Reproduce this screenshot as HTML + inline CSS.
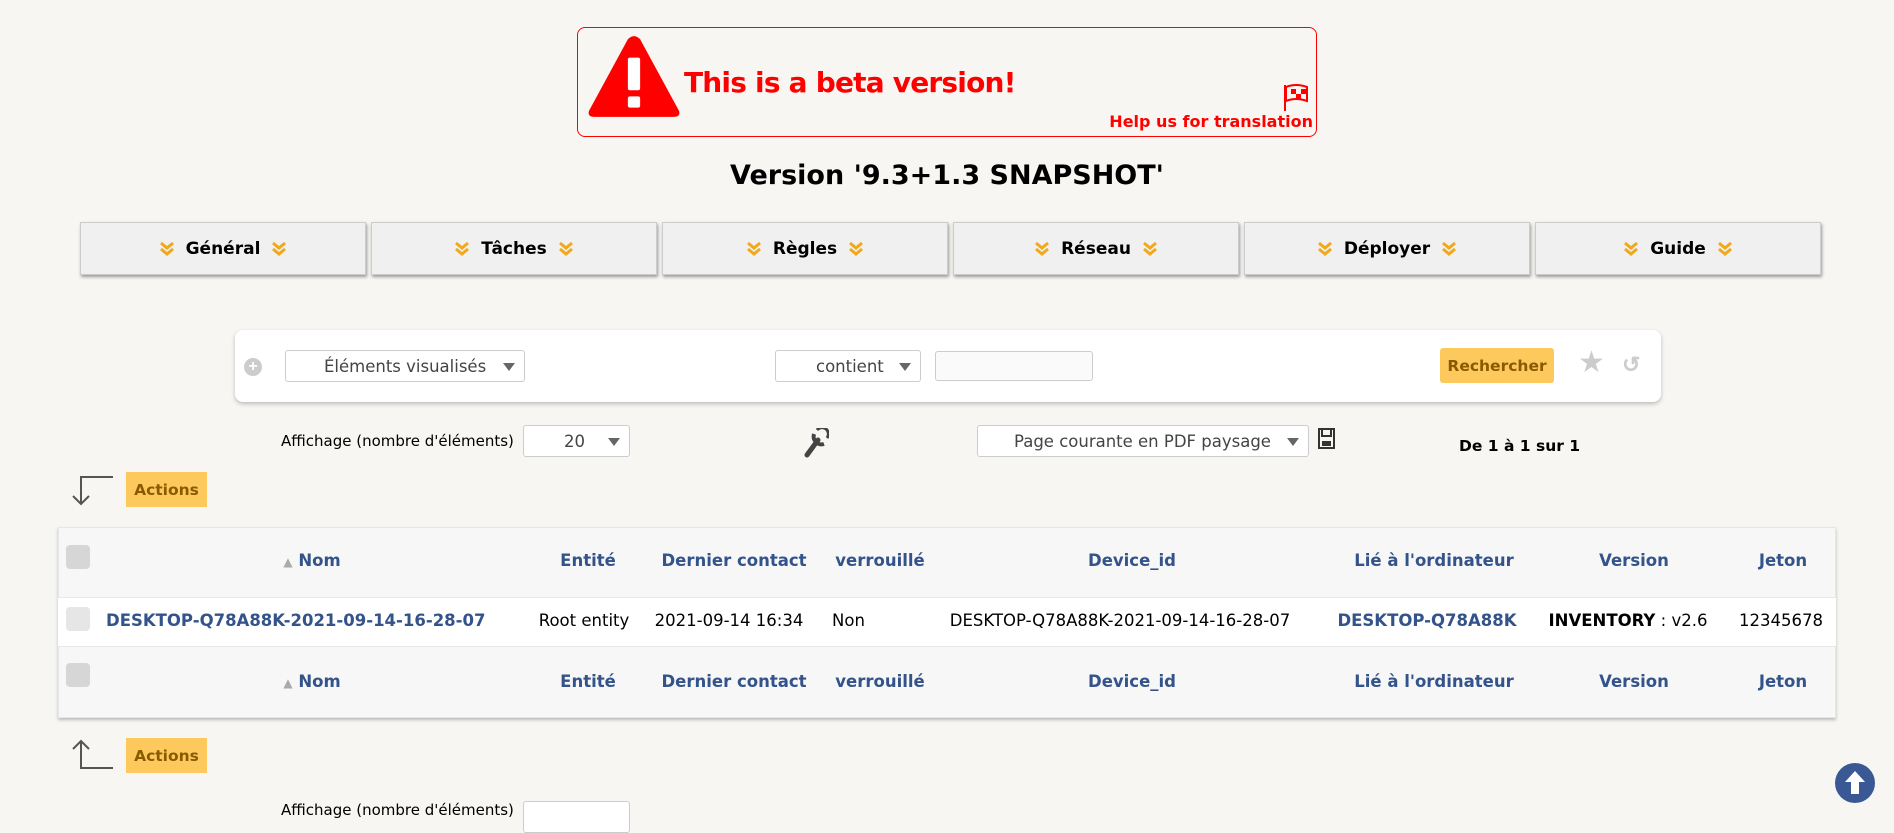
<!DOCTYPE html>
<html><head><meta charset="utf-8"><style>
*{box-sizing:border-box;margin:0;padding:0}
body{width:1894px;height:811px;background:#f7f6f2;font-family:"DejaVu Sans","Liberation Sans",sans-serif;position:relative;overflow:hidden;color:#000}
.a{position:absolute}
.beta{left:577px;top:27px;width:740px;height:110px;border:1px solid #f00;border-radius:8px}
.menu{top:222px;width:286px;height:53px;background:#f0f0f0;border:1px solid #ccc;box-shadow:1px 2px 3px #999;display:flex;align-items:center;justify-content:center;font:bold 17px "DejaVu Sans",sans-serif;gap:12px}
.sel{background:#fff;border:1px solid #ccc;border-radius:3px;height:32px;font-size:16.5px;color:#444;display:flex;align-items:center}
.tri{position:absolute;right:9px;top:12px;width:0;height:0;border-left:6px solid transparent;border-right:6px solid transparent;border-top:8px solid #666}
.btn{background:#fec95c;color:#8a5a00;font-weight:bold;font-size:15.5px;display:flex;align-items:center;justify-content:center}
.th{color:#33538a;font-weight:bold;font-size:16.5px;transform:translateX(-50%);white-space:nowrap}
.td{font-size:16.5px;transform:translateX(-50%);white-space:nowrap}
.cb{width:24px;height:24px;background:#d6d6d6;border-radius:4px}
.lab{font-size:15px;white-space:nowrap}
</style></head><body>
<svg width="0" height="0" style="position:absolute"><defs><symbol id="ch" viewBox="0 0 14 16"><path d="M1 2 L7 7 L13 2 M1 8 L7 13 L13 8" fill="none" stroke="#f0a81c" stroke-width="3"/></symbol></defs></svg>
<div class="a beta">
 <svg class="a" style="left:9px;top:5px" width="94" height="88" viewBox="0 0 92 82"><path d="M40 4 Q46 -2 52 4 L90 74 Q92 80 85 80 L7 80 Q0 80 2 74 Z" fill="#f00"/><rect x="40" y="22" width="12" height="32" rx="2" fill="#fff"/><rect x="40" y="60" width="12" height="11" rx="2" fill="#fff"/></svg>
 <div class="a" style="left:106px;top:38px;color:#f00;font:bold 28px 'DejaVu Sans',sans-serif;letter-spacing:-0.8px">This is a beta version!</div>
 <svg class="a" style="left:705px;top:55px" width="26" height="28" viewBox="0 0 26 28"><line x1="2" y1="2" x2="2" y2="28" stroke="#f00" stroke-width="2"/><path d="M3 4 Q13 0 24 4 L24 18 Q13 14 3 18Z" fill="none" stroke="#f00" stroke-width="2"/><rect x="8" y="6" width="5" height="5" fill="#f00"/><rect x="13" y="11" width="5" height="5" fill="#f00"/><rect x="18" y="6" width="5" height="5" fill="#f00"/></svg>
 <div class="a" style="right:3px;top:84px;color:#f00;font:bold 16px 'DejaVu Sans',sans-serif">Help us for translation</div>
</div>
<div class="a" style="left:0;width:1894px;top:160px;text-align:center;font:bold 27px 'DejaVu Sans',sans-serif">Version '9.3+1.3 SNAPSHOT'</div>
<div class="a menu" style="left:80px"><svg width="14" height="16"><use href="#ch"/></svg>Général<svg width="14" height="16"><use href="#ch"/></svg></div>
<div class="a menu" style="left:371px"><svg width="14" height="16"><use href="#ch"/></svg>Tâches<svg width="14" height="16"><use href="#ch"/></svg></div>
<div class="a menu" style="left:662px"><svg width="14" height="16"><use href="#ch"/></svg>Règles<svg width="14" height="16"><use href="#ch"/></svg></div>
<div class="a menu" style="left:953px"><svg width="14" height="16"><use href="#ch"/></svg>Réseau<svg width="14" height="16"><use href="#ch"/></svg></div>
<div class="a menu" style="left:1244px"><svg width="14" height="16"><use href="#ch"/></svg>Déployer<svg width="14" height="16"><use href="#ch"/></svg></div>
<div class="a menu" style="left:1535px"><svg width="14" height="16"><use href="#ch"/></svg>Guide<svg width="14" height="16"><use href="#ch"/></svg></div>

<div class="a" style="left:235px;top:330px;width:1426px;height:72px;background:#fff;border-radius:8px;box-shadow:0 2px 4px #bbb"></div>
<div class="a" style="left:244px;top:358px;width:18px;height:18px;border-radius:50%;background:#ccc;color:#fff;font:bold 16px sans-serif;text-align:center;line-height:18px">+</div>
<div class="a sel" style="left:285px;top:350px;width:240px;padding-left:38px">Éléments visualisés<span class="tri"></span></div>
<div class="a sel" style="left:775px;top:350px;width:146px;padding-left:40px">contient<span class="tri"></span></div>
<div class="a sel" style="left:935px;top:351px;width:158px;height:30px;background:#fafafa"></div>
<div class="a btn" style="left:1440px;top:348px;width:114px;height:35px;border-radius:3px">Rechercher</div>
<div class="a" style="left:1578px;top:345px;color:#ccc;font-size:30px">★</div>
<div class="a" style="left:1622px;top:352px;color:#ccc;font:bold 22px sans-serif">↺</div>

<div class="a lab" style="left:281px;top:432px">Affichage (nombre d'éléments)</div>
<div class="a sel" style="left:523px;top:425px;width:107px;padding-left:40px">20<span class="tri"></span></div>
<svg class="a" style="left:803px;top:428px" width="26" height="30" viewBox="0 0 26 30"><path d="M4 27 L15 12" stroke="#444" stroke-width="5" stroke-linecap="round"/><path d="M11 6 A8 8 0 0 0 21 16" fill="none" stroke="#444" stroke-width="4"/><path d="M14 2 A6 6 0 0 1 24 10" fill="none" stroke="#444" stroke-width="3"/></svg>
<div class="a sel" style="left:977px;top:425px;width:332px;padding-left:36px">Page courante en PDF paysage<span class="tri"></span></div>
<svg class="a" style="left:1318px;top:428px" width="18" height="22" viewBox="0 0 18 22"><rect x="1" y="1" width="15" height="19" fill="none" stroke="#333" stroke-width="2"/><rect x="4" y="1" width="9" height="7" fill="none" stroke="#333" stroke-width="2"/><rect x="4" y="13" width="9" height="5" fill="#333"/></svg>
<div class="a" style="left:1459px;top:437px;font-weight:bold;font-size:15.5px">De 1 à 1 sur 1</div>

<svg class="a" style="left:68px;top:472px" width="48" height="34"><path d="M45 5 L13 5 L13 32 M5 24 L13 32 L21 24" fill="none" stroke="#555" stroke-width="2"/></svg>
<div class="a btn" style="left:126px;top:472px;width:81px;height:35px">Actions</div>

<div class="a" style="left:58px;top:527px;width:1778px;height:191px;background:#f7f7f7;box-shadow:0 2px 3px #bbb;border:1px solid #e6e6e6"></div>
<div class="a" style="left:58px;top:597px;width:1778px;height:50px;background:#fff;border-top:1px solid #e8e8e8;border-bottom:1px solid #e8e8e8"></div>
<div class="a cb" style="left:66px;top:545px"></div>
<div class="a cb" style="left:66px;top:607px;background:#e6e6e6"></div>
<div class="a cb" style="left:66px;top:663px"></div>
<div class="a th" style="left:312px;top:551px"><span style="color:#aaa;font-size:12px">▲</span> Nom</div>
<div class="a th" style="left:588px;top:551px">Entité</div>
<div class="a th" style="left:734px;top:551px">Dernier contact</div>
<div class="a th" style="left:880px;top:551px">verrouillé</div>
<div class="a th" style="left:1132px;top:551px">Device_id</div>
<div class="a th" style="left:1434px;top:551px">Lié à l'ordinateur</div>
<div class="a th" style="left:1634px;top:551px">Version</div>
<div class="a th" style="left:1783px;top:551px">Jeton</div>
<div class="a" style="left:106px;top:611px;color:#33538a;font-weight:bold;font-size:16.5px">DESKTOP-Q78A88K-2021-09-14-16-28-07</div>
<div class="a td" style="left:584px;top:611px">Root entity</div>
<div class="a td" style="left:729px;top:611px">2021-09-14 16:34</div>
<div class="a" style="left:832px;top:611px;font-size:16.5px">Non</div>
<div class="a td" style="left:1120px;top:611px">DESKTOP-Q78A88K-2021-09-14-16-28-07</div>
<div class="a td" style="left:1427px;top:611px;color:#33538a;font-weight:bold">DESKTOP-Q78A88K</div>
<div class="a td" style="left:1628px;top:611px"><b>INVENTORY</b> : v2.6</div>
<div class="a td" style="left:1781px;top:611px">12345678</div>
<div class="a th" style="left:312px;top:672px"><span style="color:#aaa;font-size:12px">▲</span> Nom</div>
<div class="a th" style="left:588px;top:672px">Entité</div>
<div class="a th" style="left:734px;top:672px">Dernier contact</div>
<div class="a th" style="left:880px;top:672px">verrouillé</div>
<div class="a th" style="left:1132px;top:672px">Device_id</div>
<div class="a th" style="left:1434px;top:672px">Lié à l'ordinateur</div>
<div class="a th" style="left:1634px;top:672px">Version</div>
<div class="a th" style="left:1783px;top:672px">Jeton</div>

<svg class="a" style="left:68px;top:738px" width="48" height="34"><path d="M45 30 L13 30 L13 3 M5 11 L13 3 L21 11" fill="none" stroke="#555" stroke-width="2"/></svg>
<div class="a btn" style="left:126px;top:738px;width:81px;height:35px">Actions</div>
<div class="a lab" style="left:281px;top:801px">Affichage (nombre d'éléments)</div>
<div class="a sel" style="left:523px;top:801px;width:107px"></div>
<div class="a" style="left:1835px;top:763px;width:40px;height:40px;border-radius:50%;background:#3a5894"><svg width="40" height="40"><path d="M20 8 L30 19 L24 19 L24 31 L16 31 L16 19 L10 19 Z" fill="#fff"/></svg></div>
</body></html>
